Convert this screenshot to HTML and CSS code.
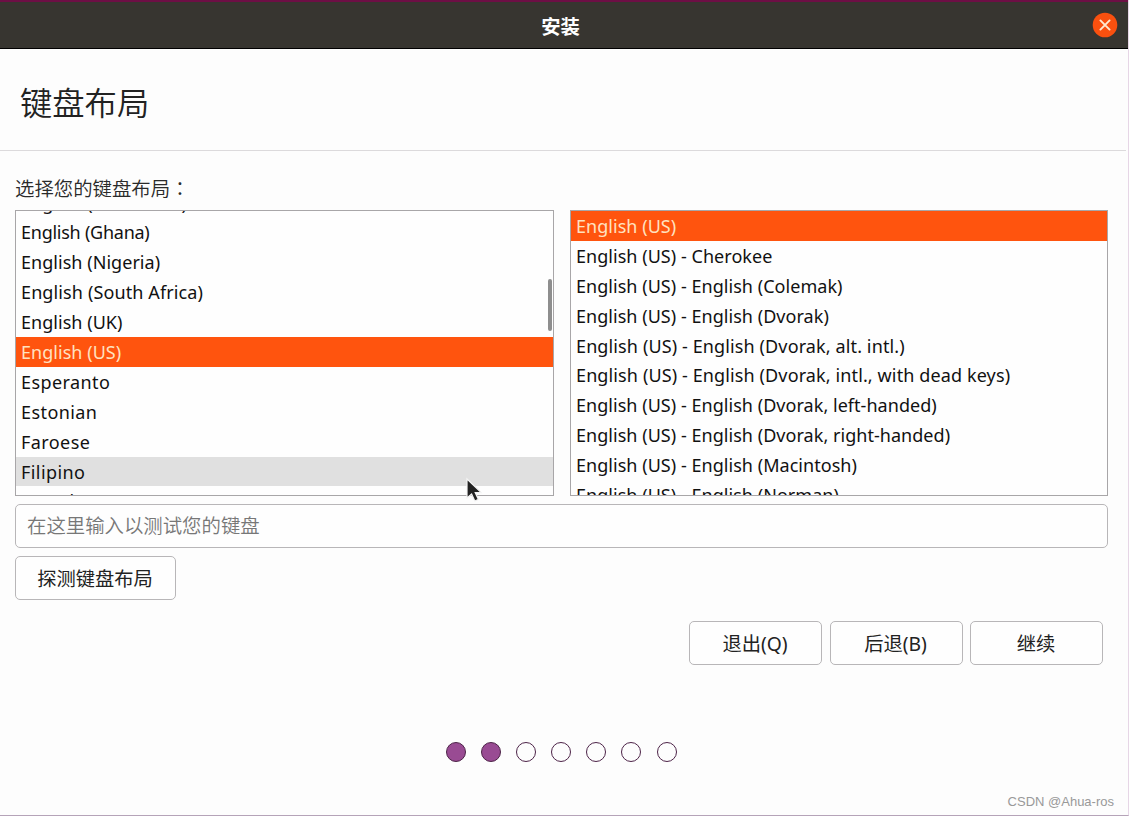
FILE: index.html
```html
<!DOCTYPE html>
<html lang="zh-CN">
<head>
<meta charset="utf-8">
<title>安装</title>
<link rel="stylesheet" href="styles.css">
</head>
<body>
<div class="window">
  <header class="titlebar">
    <span class="title">安装</span>
    <svg class="close" viewBox="0 0 26 26" width="26" height="26"><circle cx="13" cy="13" r="12.3" fill="#f9500f"/><path d="M8.4 8.4l9.2 9.2M17.6 8.4l-9.2 9.2" stroke="#ffe9cf" stroke-width="1.9" stroke-linecap="round"/></svg>
  </header>
  <div class="heading"><h1>键盘布局</h1></div>
  <main class="content">
    <p class="label">选择您的键盘布局<span class="colon" lang="zh-TW">：</span></p>
    <div class="lists">
      <div class="list-wrap">
        <ul class="list scrolled">
          <li>English (Cameroon)</li>
          <li class="tight">English (Ghana)</li>
          <li>English (Nigeria)</li>
          <li class="loose">English (South Africa)</li>
          <li>English (UK)</li>
          <li class="selected">English (US)</li>
          <li class="word">Esperanto</li>
          <li class="word">Estonian</li>
          <li class="word">Faroese</li>
          <li class="word hover">Filipino</li>
          <li class="word">French</li>
        </ul>
        <div class="thumb"></div>
        <svg class="cursor" viewBox="0 0 18 26" width="18" height="26"><path d="M2 2v19l4.6-4 3.2 7 3.6-1.6-3.2-6.8h6z" fill="#222" stroke="#f4f4f4" stroke-width="1.2"/></svg>
      </div>
      <div class="list-wrap">
        <ul class="list">
          <li class="selected">English (US)</li>
          <li>English (US) - Cherokee</li>
          <li>English (US) - English (Colemak)</li>
          <li>English (US) - English (Dvorak)</li>
          <li class="loose">English (US) - English (Dvorak, alt. intl.)</li>
          <li class="loose">English (US) - English (Dvorak, intl., with dead keys)</li>
          <li>English (US) - English (Dvorak, left-handed)</li>
          <li>English (US) - English (Dvorak, right-handed)</li>
          <li>English (US) - English (Macintosh)</li>
          <li>English (US) - English (Norman)</li>
        </ul>
      </div>
    </div>
    <input class="test" type="text" placeholder="在这里输入以测试您的键盘">
    <button class="btn detect">探测键盘布局</button>
    <div class="actions">
      <button class="btn">退出(Q)</button>
      <button class="btn">后退(B)</button>
      <button class="btn">继续</button>
    </div>
    <div class="dots"><i class="on"></i><i class="on"></i><i></i><i></i><i></i><i></i><i></i></div>
  </main>
  <div class="watermark">CSDN @Ahua-ros</div>
</div>
</body>
</html>
```
FILE: styles.css
```css
* { box-sizing: border-box; }
body { margin: 0; background: #6d0f45; font-family: "Noto Sans", "Noto Sans CJK SC", sans-serif; }
.window {
  position: relative;
  height: 816px;
  background: #fdfdfd;
  border-right: 1px solid #e6d6e6;
  border-bottom: 1px solid #b5a3b8;
  overflow: hidden;
}
.titlebar {
  display: flex;
  align-items: center;
  justify-content: center;
  height: 49px;
  margin-right: -1px;
  background: #373530;
  border-top: 2px solid #6d0f45;
  border-bottom: 1px solid #000;
  color: #fff;
  position: relative;
}
.title { font: bold 19.3px/28px "Noto Sans CJK SC", sans-serif; transform: translate(-4px, 1px); }
.close { position: absolute; right: 11px; top: 10px; }
.heading {
  height: 102px;
  padding: 29px 20px 0;
  margin-right: 2px;
  border-bottom: 1px solid #dcdadc;
}
h1 { margin: 0; font: 350 32.3px/46px "Noto Sans CJK SC", sans-serif; color: #222; }
.content { display: flex; flex-direction: column; padding: 22px 21px 0 15px; }
.label { margin: 0; height: 37px; font: 350 19.4px/29px "Noto Sans CJK SC", sans-serif; color: #2a2a2a; text-spacing-trim: space-all; }
.colon { font-family: "Noto Sans CJK TC", sans-serif; }
.lists { display: grid; grid-template-columns: 539px 538px; gap: 16px; height: 286px; }
.list-wrap { position: relative; height: 286px; }
.list {
  height: 286px;
  margin: 0;
  padding: 0;
  list-style: none;
  overflow: hidden;
  border: 1px solid #a8a6a8;
  background: #fefefe;
}
.list li {
  height: 29.9px;
  padding-left: 5px;
  font-size: 18px;
  line-height: 30px;
  letter-spacing: 0.04px;
  color: #111;
  white-space: nowrap;
}
.list .tight { letter-spacing: -0.25px; }
.list .loose { letter-spacing: 0.12px; }
.list .word { letter-spacing: 0.42px; }
.scrolled li:first-child { margin-top: -23.5px; }
.list .selected { background: #ff540e; color: #ffe2c0; }
.list .hover { background: #e0e0e0; }
.thumb {
  position: absolute;
  right: 2px;
  top: 69px;
  width: 4px;
  height: 52px;
  border-radius: 2px;
  background: #8e8e8e;
}
.cursor { position: absolute; left: 450px; top: 267px; }
.test {
  height: 44px;
  margin-top: 8px;
  margin-right: -1px;
  padding: 0 11px 4px;
  border: 1px solid #b8b6b8;
  border-radius: 5px;
  background: #fefefe;
  font: 350 19.4px "Noto Sans CJK SC", sans-serif;
}
.test::placeholder { color: #777; opacity: 1; }
.btn {
  width: 133px;
  height: 44px;
  padding: 0 1px 0 0;
  border: 1px solid #b8b6b8;
  border-radius: 5px;
  background: #fefefe;
  color: #222;
  font: 19.3px "Noto Sans", "Noto Sans CJK SC", sans-serif;
}
.detect { width: 161px; margin-top: 8px; }
.actions { display: flex; justify-content: flex-end; gap: 7.5px; margin: 21px 4px 0 0; }
.dots { display: flex; gap: 15.1px; margin: 77px 0 0 431px; }
.dots i { width: 20px; height: 20px; border: 1.2px solid #4d2348; border-radius: 50%; }
.dots .on { background: #994b93; }
.watermark {
  position: absolute;
  right: 14px;
  bottom: 4px;
  font: 13px/18px "Liberation Sans", sans-serif;
  color: #999;
}
```
